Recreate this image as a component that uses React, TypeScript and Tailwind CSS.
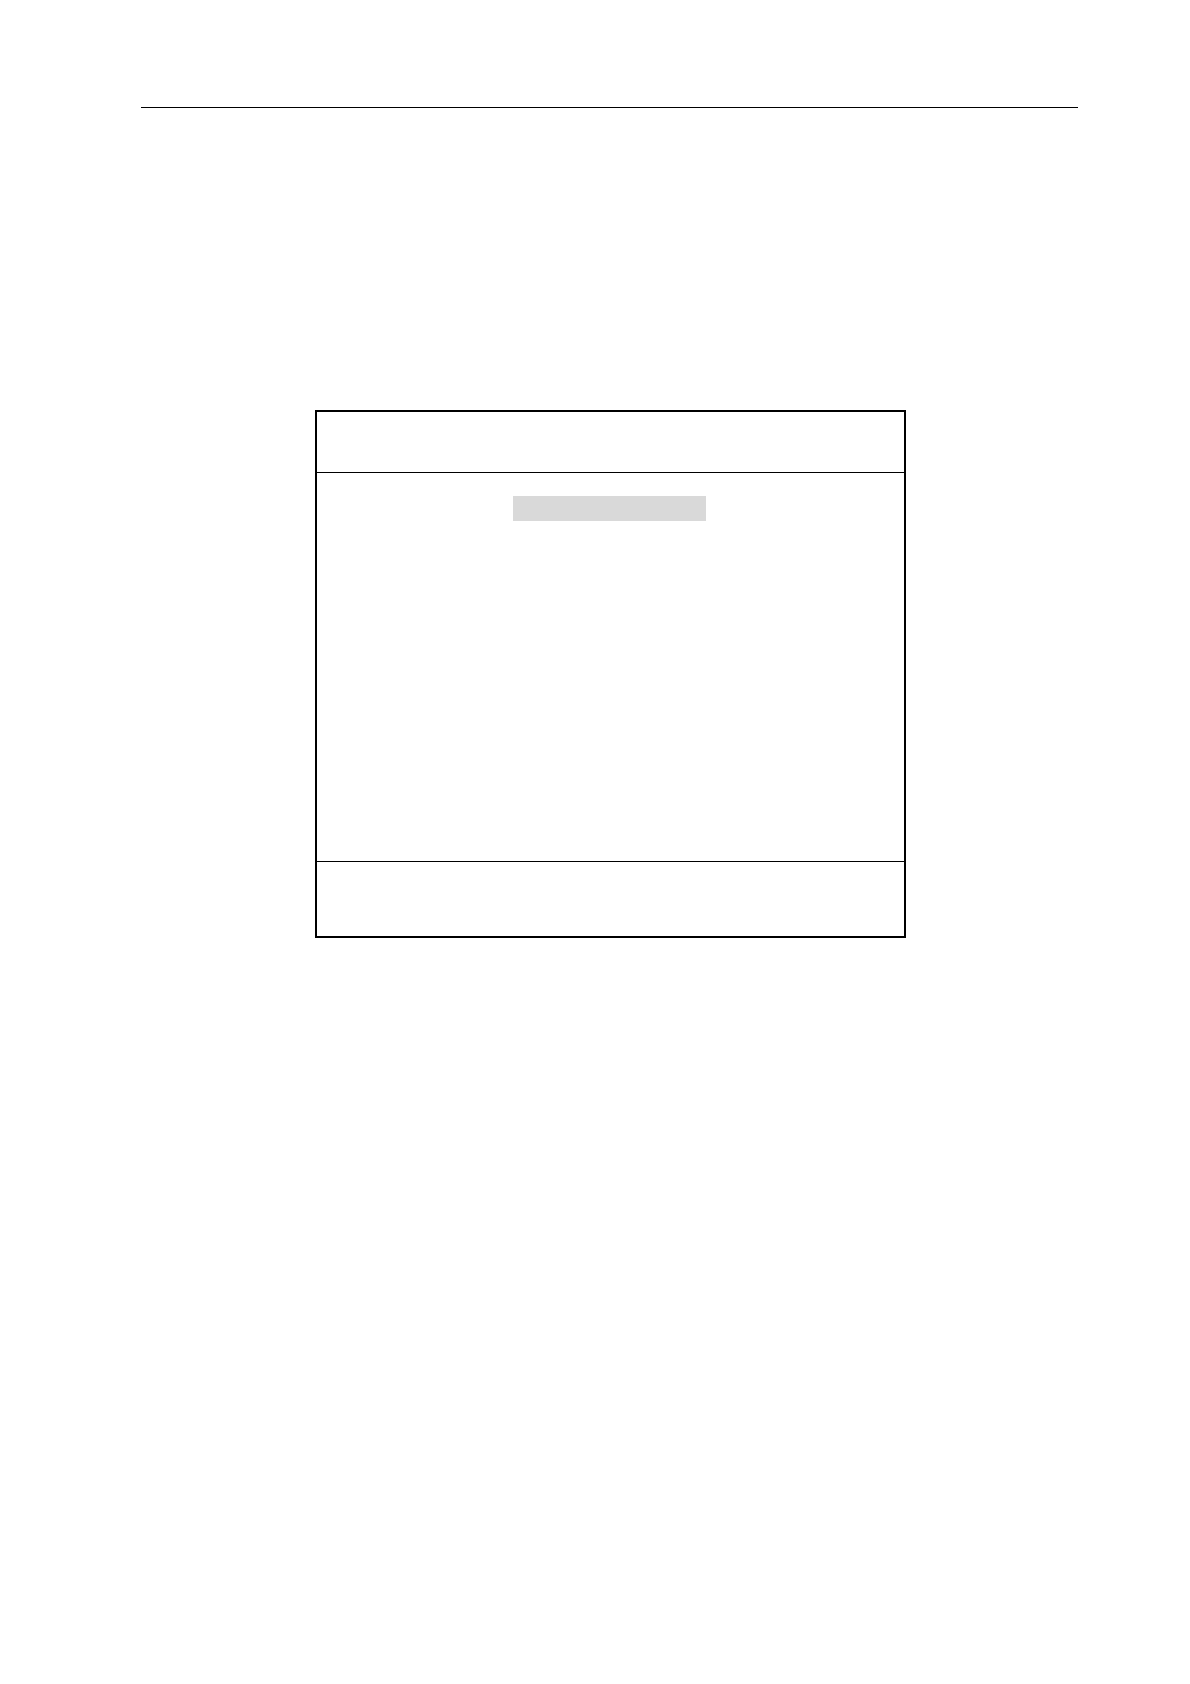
function ScreenFrame() {
  return (
    <section
      aria-label="Screen"
      className="mt-[302px] mr-[172px] ml-[174px] flex flex-col border-2 border-black"
    >
      <header className="min-h-[61px] border-b border-black" />
      <div className="min-h-[388px] pt-[23px] pr-[198px] pl-[196px]">
        <div className="h-[25px] bg-[#d9d9d9]" />
      </div>
      <footer className="min-h-[75px] border-t border-black" />
    </section>
  );
}

export default function App() {
  return (
    <main className="min-h-screen bg-white pt-[107px] pr-[112px] pl-[141px] font-['Liberation_Sans',sans-serif]">
      <hr className="border-t border-black" />
      <ScreenFrame />
    </main>
  );
}
